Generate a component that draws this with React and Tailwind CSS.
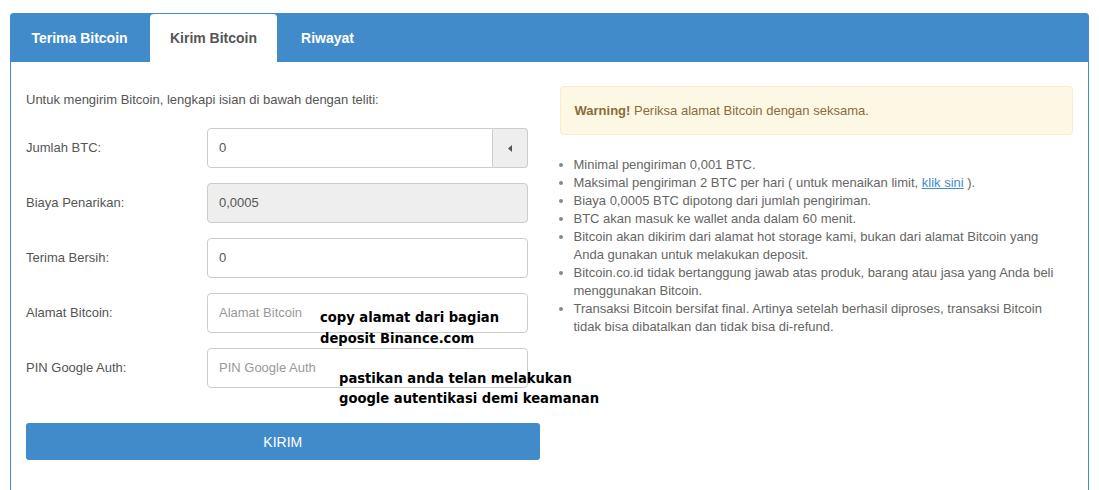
import React from 'react';

const rows = [
  { label: 'Jumlah BTC:', value: '0', addon: true },
  { label: 'Biaya Penarikan:', value: '0,0005', disabled: true },
  { label: 'Terima Bersih:', value: '0' },
  { label: 'Alamat Bitcoin:', placeholder: 'Alamat Bitcoin' },
  { label: 'PIN Google Auth:', placeholder: 'PIN Google Auth' },
];

const Field = ({ row }) => {
  if (row.addon) {
    return (
      <div className="flex w-[321px] h-[40px]">
        <div className="flex-1 border border-[#ccc] rounded-l-[4px] bg-white flex items-center pl-[11px] text-[#555]">
          {row.value}
        </div>
        <div className="w-[35px] border border-l-0 border-[#ccc] rounded-r-[4px] bg-[#eee] flex items-center justify-center">
          <svg width="5" height="7" viewBox="0 0 5 7">
            <path d="M4 0 L0 3.5 L4 7 Z" fill="#555" />
          </svg>
        </div>
      </div>
    );
  }
  return (
    <div
      className={
        'w-[321px] h-[40px] border border-[#ccc] rounded-[4px] flex items-center pl-[11px] ' +
        (row.disabled ? 'bg-[#eee] text-[#555]' : 'bg-white text-[#555]')
      }
    >
      {row.value ? row.value : <span className="text-[#999]">{row.placeholder}</span>}
    </div>
  );
};

const notes = [
  <>Minimal pengiriman 0,001 BTC.</>,
  <>
    Maksimal pengiriman 2 BTC per hari ( untuk menaikan limit,{' '}
    <a className="text-[#428bca] underline">klik sini</a> ).
  </>,
  <>Biaya 0,0005 BTC dipotong dari jumlah pengiriman.</>,
  <>BTC akan masuk ke wallet anda dalam 60 menit.</>,
  <>Bitcoin akan dikirim dari alamat hot storage kami, bukan dari alamat Bitcoin yang Anda gunakan untuk melakukan deposit.</>,
  <>Bitcoin.co.id tidak bertanggung jawab atas produk, barang atau jasa yang Anda beli menggunakan Bitcoin.</>,
  <>Transaksi Bitcoin bersifat final. Artinya setelah berhasil diproses, transaksi Bitcoin tidak bisa dibatalkan dan tidak bisa di-refund.</>,
];

export default function App() {
  return (
    <div className="w-[1099px] h-[490px] overflow-hidden bg-white pt-[13px] pl-[10px] font-['Liberation_Sans',Arial,sans-serif] text-[13px] leading-[18px]">
      <div className="w-[1079px] h-[500px] border border-[#428bca] rounded-t-[3px]">
        {/* tabs */}
        <div className="h-[48px] bg-[#428bca] flex items-end pl-[1px] gap-[3px] text-[14px] font-bold">
          <div className="w-[135px] h-[48px] flex items-center justify-center text-white">Terima Bitcoin</div>
          <div className="w-[127px] h-[48px] flex items-center justify-center bg-white text-[#555] rounded-t-[4px]">
            Kirim Bitcoin
          </div>
          <div className="w-[95px] h-[48px] flex items-center justify-center text-white">Riwayat</div>
        </div>

        <div className="grid grid-cols-2 gap-5 px-[15px] pt-[24px]">
          {/* form */}
          <div className="relative">
            <p className="mt-[5px] text-[#555]">Untuk mengirim Bitcoin, lengkapi isian di bawah dengan teliti:</p>
            <div className="mt-[19px] flex flex-col gap-[15px]">
              {rows.map((row) => (
                <div key={row.label} className="flex items-center">
                  <div className="w-[181px] text-[#555]">{row.label}</div>
                  <Field row={row} />
                </div>
              ))}
            </div>
            <button className="mt-[35px] w-full h-[37px] bg-[#428bca] rounded-[3px] text-white text-[14px]">
              KIRIM
            </button>

            <div className="absolute left-[294px] top-[220px] font-['DejaVu_Sans_Condensed',sans-serif] font-bold text-[14.6px] leading-[21px] text-black whitespace-nowrap">
              copy alamat dari bagian
              <br />
              deposit Binance.com
            </div>
            <div className="absolute left-[313px] top-[282px] font-['DejaVu_Sans_Condensed',sans-serif] font-bold text-[14.6px] leading-[20px] text-black whitespace-nowrap">
              pastikan anda telan melakukan
              <br />
              google autentikasi demi keamanan
            </div>
          </div>

          {/* info */}
          <div>
            <div className="h-[49px] border border-[#faebcc] bg-[#fcf8e3] rounded-[4px] flex items-center px-[14px] text-[#8a6d3b]">
              <span>
                <b>Warning!</b> Periksa alamat Bitcoin dengan seksama.
              </span>
            </div>
            <ul className="mt-[21px] list-disc pl-[14px] pr-[10px] text-[#666] marker:text-[#888]">
              {notes.map((n, i) => (
                <li key={i}>{n}</li>
              ))}
            </ul>
          </div>
        </div>
      </div>
    </div>
  );
}
